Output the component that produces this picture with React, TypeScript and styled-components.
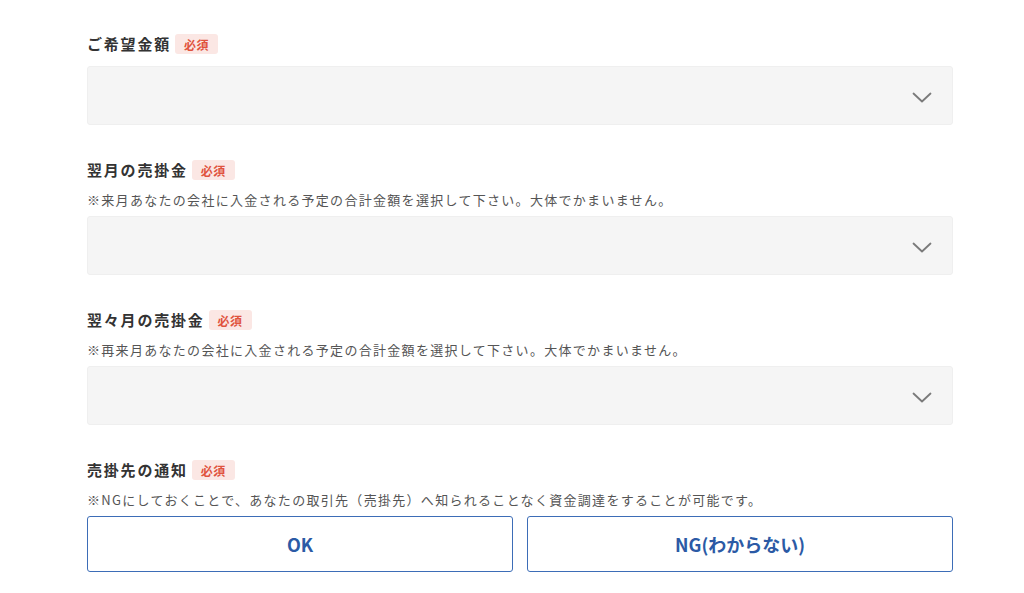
import React, { useState } from 'react'
import styled, { createGlobalStyle } from 'styled-components'

const GlobalStyle = createGlobalStyle`
  html, body {
    margin: 0;
    padding: 0;
    background: #fff;
  }
  body {
    font-family: 'Noto Sans CJK JP', 'Noto Sans', sans-serif;
    color: #333;
  }
`

type Field = {
  label: string
  note?: string
}

const selectFields: Field[] = [
  { label: 'ご希望金額' },
  { label: '翌月の売掛金', note: '※来月あなたの会社に入金される予定の合計金額を選択して下さい。大体でかまいません。' },
  { label: '翌々月の売掛金', note: '※再来月あなたの会社に入金される予定の合計金額を選択して下さい。大体でかまいません。' },
]

const Chevron = () => (
  <svg width="20" height="12" viewBox="0 0 20 12" fill="none">
    <path d="M1.5 1.5 L10 9.5 L18.5 1.5" stroke="#7a7a7a" strokeWidth="1.8" strokeLinecap="round" strokeLinejoin="round" />
  </svg>
)

export default function App() {
  const [notice, setNotice] = useState<string | null>(null)

  return (
    <>
      <GlobalStyle />
      <Form>
        {selectFields.map(field => (
          <Section key={field.label}>
            <LabelRow>
              <Label>{field.label}</Label>
              <Required>必須</Required>
            </LabelRow>
            {field.note && <Note>{field.note}</Note>}
            <SelectBox>
              <Chevron />
            </SelectBox>
          </Section>
        ))}

        <Section>
          <LabelRow>
            <Label>売掛先の通知</Label>
            <Required>必須</Required>
          </LabelRow>
          <Note>※NGにしておくことで、あなたの取引先（売掛先）へ知られることなく資金調達をすることが可能です。</Note>
          <ButtonRow>
            <ChoiceButton $active={notice === 'ok'} onClick={() => setNotice('ok')}>OK</ChoiceButton>
            <ChoiceButton $active={notice === 'ng'} onClick={() => setNotice('ng')}>NG(わからない)</ChoiceButton>
          </ButtonRow>
        </Section>
      </Form>
    </>
  )
}

const Form = styled.div`
  width: 866px;
  margin-left: 87px;
  padding-top: 34px;
  display: flex;
  flex-direction: column;
  gap: 35px;
`

const Section = styled.div`
  display: flex;
  flex-direction: column;
`

const LabelRow = styled.div`
  display: flex;
  align-items: center;
  height: 20px;
  margin-bottom: 12px;
`

const Label = styled.span`
  font-size: 15px;
  font-weight: 700;
  letter-spacing: 1.8px;
  color: #333;
  line-height: 20px;
`

const Required = styled.span`
  margin-left: 4px;
  height: 20px;
  padding: 0 9px;
  display: inline-flex;
  align-items: center;
  background: #fbe7e4;
  color: #e0533d;
  border-radius: 3px;
  font-size: 12px;
  font-weight: 700;
  letter-spacing: 0.5px;
`

const Note = styled.p`
  margin: -1px 0 7px;
  font-size: 13px;
  line-height: 18px;
  letter-spacing: 1.3px;
  color: #555;
`

const SelectBox = styled.div`
  height: 59px;
  box-sizing: border-box;
  background: #f5f5f5;
  border: 1px solid #efefef;
  border-radius: 3px;
  display: flex;
  align-items: center;
  justify-content: flex-end;
  padding: 4px 20px 0 0;
`

const ButtonRow = styled.div`
  display: grid;
  grid-template-columns: 1fr 1fr;
  gap: 14px;
`

const ChoiceButton = styled.button<{ $active: boolean }>`
  height: 56px;
  background: ${p => (p.$active ? '#eef3fb' : '#fff')};
  border: 1px solid #3d6db7;
  border-radius: 3px;
  color: #2b5aa5;
  font-family: 'Noto Sans CJK JP', 'Noto Sans', sans-serif;
  font-size: 18px;
  font-weight: 700;
  cursor: pointer;
`
